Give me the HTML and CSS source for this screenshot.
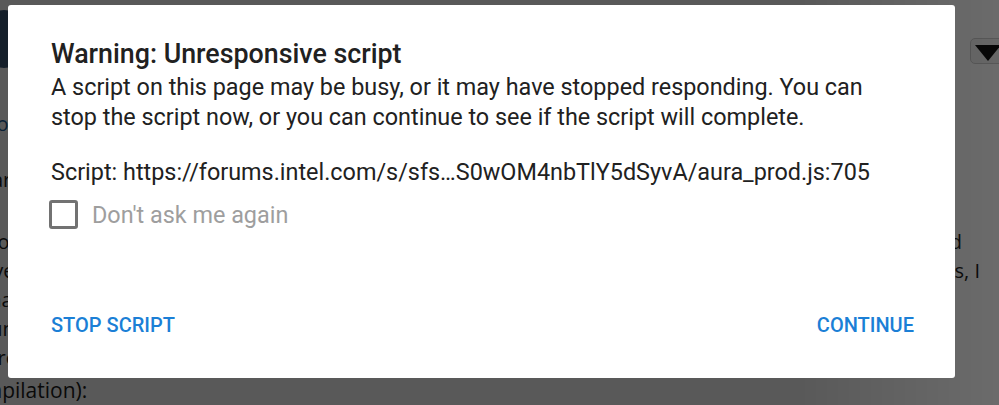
FILE: index.html
```html
<!DOCTYPE html>
<html lang="en">
<head>
  <meta charset="UTF-8">
  <meta name="viewport" content="width=device-width, initial-scale=1.0">
  <title>Unresponsive script</title>
  <link rel="stylesheet" href="styles.css">
</head>
<body>
  <div class="page">
    <div class="top-row">
      <div class="avatar"></div>
      <div class="menu-btn"><span class="arrow"></span></div>
    </div>
    <div class="line link">Documentation</div>
    <div class="line gap">varies</div>
    <div class="para">
      <div class="row"><span>would</span><span class="tail">d</span></div>
      <div class="row"><span>every</span><span>s, I</span></div>
      <div class="row"><span>that</span><span></span></div>
      <div class="row"><span>run</span><span></span></div>
      <div class="row"><span>(cross</span><span></span></div>
      <div class="row last"><span>compilation):</span><span></span></div>
    </div>
  </div>

  <div class="overlay"></div>

  <div class="dialog">
    <h1>Warning: Unresponsive script</h1>
    <p class="message">A script on this page may be busy, or it may have stopped responding. You can stop the script now, or you can continue to see if the script will complete.</p>
    <p class="source">Script: https://forums.intel.com/s/sfs…S0wOM4nbTlY5dSyvA/aura_prod.js:705</p>
    <label class="check">
      <span class="box"></span>
      <span>Don't ask me again</span>
    </label>
    <div class="actions">
      <button>STOP SCRIPT</button>
      <button>CONTINUE</button>
    </div>
  </div>
</body>
</html>
```

FILE: styles.css
```css
html, body {
  margin: 0;
  height: 100%;
  overflow: hidden;
}

body {
  font-family: "Open Sans", "DejaVu Sans", sans-serif;
  background-color: #fff;
  color: #1c1c1c;
}

.page {
  margin-left: -18px;
  width: 1030px;
}

.top-row {
  display: flex;
  justify-content: space-between;
  padding-top: 10px;
  height: 100px;
}

.avatar {
  width: 44px;
  height: 58px;
  border-radius: 50%;
  background-color: #3c5a7a;
}

.menu-btn {
  width: 42px;
  height: 26px;
  margin-top: 28px;
  border: 1px solid #cfcfcf;
  border-radius: 5px;
  background-color: #f2f2f2;
  display: flex;
  align-items: center;
  padding-left: 4px;
  box-sizing: border-box;
}

.arrow {
  width: 0;
  height: 0;
  border-left: 13px solid transparent;
  border-right: 13px solid transparent;
  border-top: 16px solid #111;
  margin-top: 4px;
}

.line {
  font-size: 20px;
  line-height: 28px;
}

.link {
  color: #1d5f9a;
}

.gap {
  margin-top: 28px;
}

.para {
  margin-top: 33px;
  font-size: 20px;
  line-height: 29px;
}

.row {
  display: flex;
  justify-content: space-between;
  padding-right: 32px;
}

.row .tail {
  margin-right: 18px;
}

.row.last {
  margin-top: 4px;
  margin-left: -22px;
  font-size: 21px;
}

.overlay {
  position: fixed;
  inset: 0;
  background: linear-gradient(to right, rgba(0, 0, 0, 0.65), rgba(0, 0, 0, 0.65) 80%, rgba(0, 0, 0, 0.58));
}

.dialog {
  position: absolute;
  left: 8px;
  top: 5px;
  width: 947px;
  height: 373px;
  box-sizing: border-box;
  padding: 34px 30px 0 43px;
  background-color: #fff;
  border-radius: 3px;
  font-family: Roboto, "Noto Sans", sans-serif;
  color: #212121;
  display: flex;
  flex-direction: column;
}

h1 {
  margin: 0;
  font-size: 26.8px;
  font-weight: 500;
  line-height: 30px;
}

.message {
  margin: 3px 0 0;
  max-width: 830px;
  font-size: 23.4px;
  line-height: 30px;
}

.source {
  margin: 25px 0 0;
  font-size: 23.4px;
  line-height: 30px;
}

.check {
  display: flex;
  align-items: center;
  gap: 14px;
  margin-top: 13px;
  margin-left: -2px;
  font-size: 23.4px;
  color: #9e9e9e;
}

.box {
  width: 23px;
  height: 23px;
  border: 3px solid #727272;
  border-radius: 3px;
}

.actions {
  display: flex;
  justify-content: space-between;
  margin-top: auto;
  margin-bottom: 41px;
  padding-right: 11px;
}

button {
  font-family: Roboto, "Noto Sans", sans-serif;
  font-size: 20px;
  font-weight: 500;
  color: #1b7fd6;
  background: none;
  border: none;
  padding: 0;
  cursor: pointer;
}
```
